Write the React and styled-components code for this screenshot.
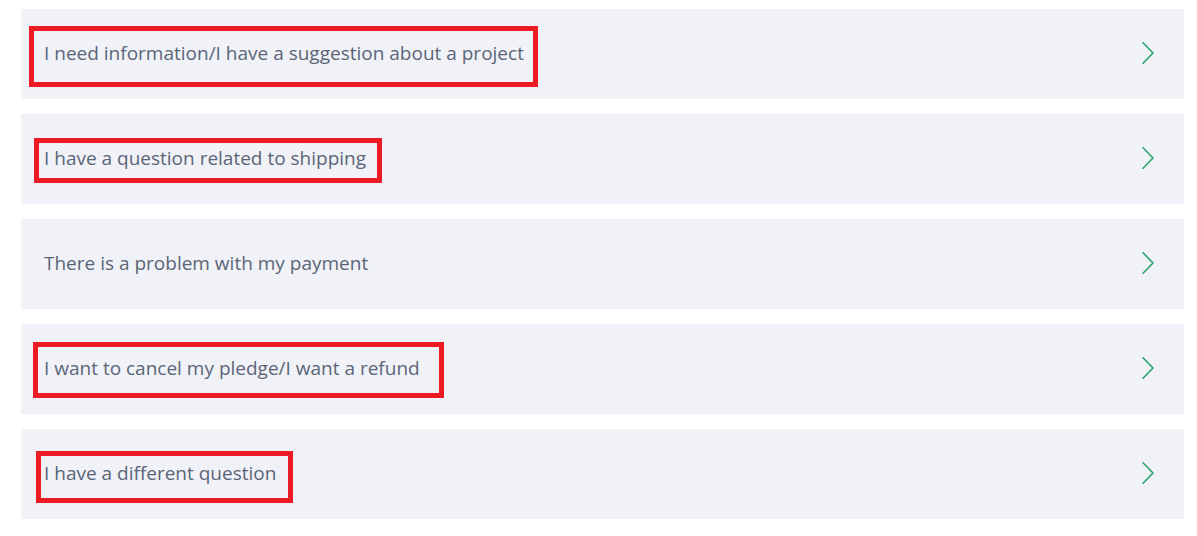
import React from 'react'
import styled, { createGlobalStyle } from 'styled-components'

const GlobalStyle = createGlobalStyle`
  body {
    margin: 0;
    background: #ffffff;
    font-family: "Open Sans", "Noto Sans", sans-serif;
  }
`

const topics = [
  { label: 'I need information/I have a suggestion about a project', mark: { left: 8, top: 17, width: 509, height: 61 } },
  { label: 'I have a question related to shipping', mark: { left: 13, top: 24, width: 348, height: 45 } },
  { label: 'There is a problem with my payment' },
  { label: 'I want to cancel my pledge/I want a refund', mark: { left: 12, top: 18, width: 411, height: 56 } },
  { label: 'I have a different question', mark: { left: 15, top: 22, width: 257, height: 52 } },
]

const Chevron = () => (
  <svg width="12" height="22" viewBox="0 0 12 22" fill="none">
    <path d="M1 0.8 L11 11 L1 21.2" stroke="#27a36e" strokeWidth="1.6" strokeLinecap="round" strokeLinejoin="round" />
  </svg>
)

export default function App() {
  return (
    <>
      <GlobalStyle />
      <List>
        {topics.map((t) => (
          <Row key={t.label}>
            <Label>{t.label}</Label>
            <Arrow><Chevron /></Arrow>
            {t.mark && (
              <Mark
                style={{ left: t.mark.left, top: t.mark.top, width: t.mark.width, height: t.mark.height }}
              />
            )}
          </Row>
        ))}
      </List>
    </>
  )
}

const List = styled.div`
  display: flex;
  flex-direction: column;
  gap: 15px;
  padding: 9px 13px 0 21px;
`

const Row = styled.div`
  position: relative;
  height: 90px;
  background: #f0f2f7;
  display: flex;
  align-items: center;
  justify-content: space-between;
  padding: 0 30px 2px 23px;
  box-sizing: border-box;
  cursor: pointer;
`

const Label = styled.span`
  font-size: 19px;
  line-height: 24px;
  color: #5b6577;
  letter-spacing: 0;
`

const Arrow = styled.span`
  display: flex;
  align-items: center;
`

const Mark = styled.div`
  position: absolute;
  box-sizing: border-box;
  border: 5px solid #ed1c24;
  pointer-events: none;
`
